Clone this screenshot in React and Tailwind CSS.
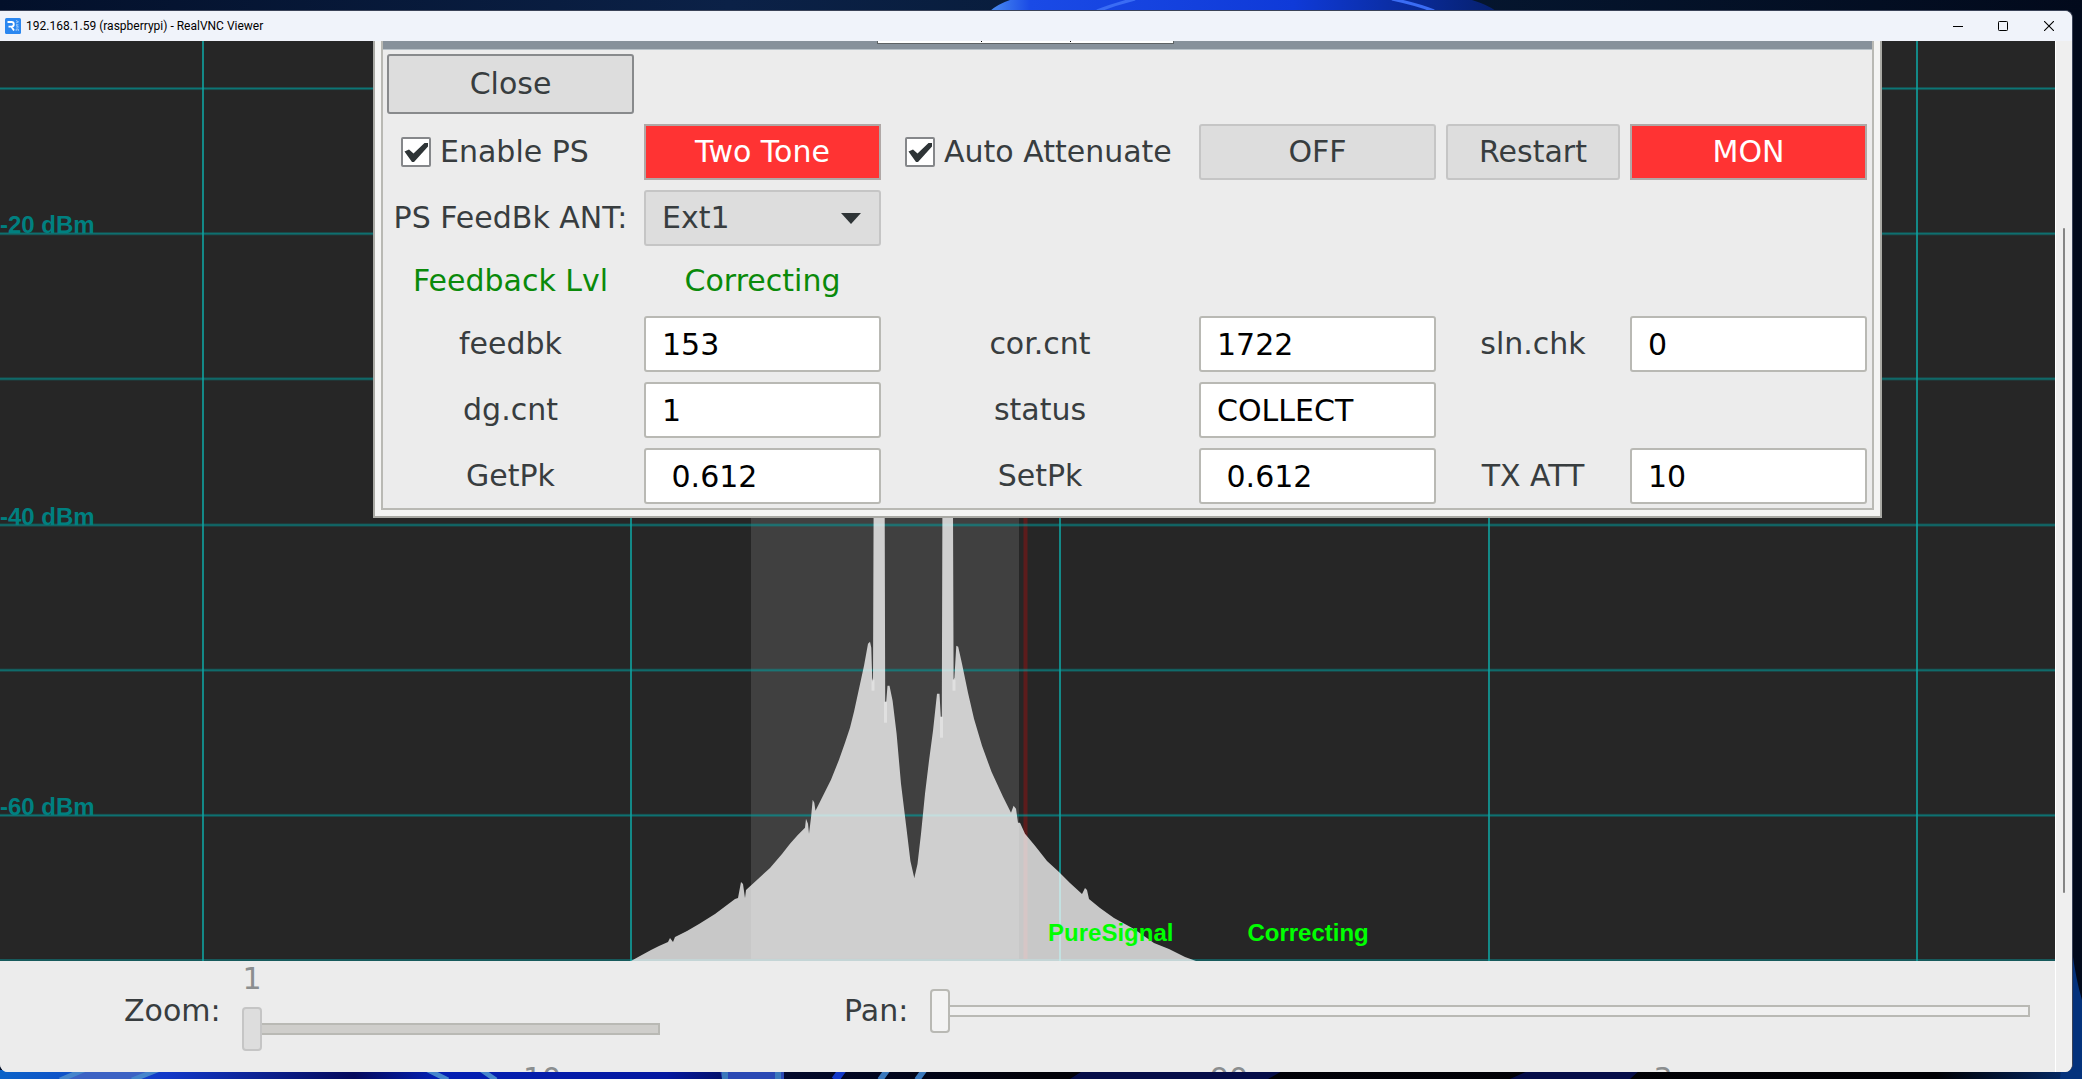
import React from "react";

const LABEL = "flex items-center justify-center whitespace-nowrap text-[#383d3f]";
const BUTTON = "flex h-full w-full items-center justify-center whitespace-nowrap rounded-[3px] border-2 border-[#c5c5c5] bg-[#dddddd] text-[#383d3f]";
const RED_BUTTON = "flex h-full w-full items-center justify-center whitespace-nowrap border-2 border-[#b0a8a6] bg-[#ff3333] text-white";
const ENTRY = "h-full w-full min-w-0 rounded-[3px] border-2 border-[#b9b9b4] bg-white px-4 text-black outline-none";
const RANGE =
  "block h-11 w-full appearance-none bg-transparent outline-none [&::-webkit-slider-runnable-track]:h-3 [&::-webkit-slider-runnable-track]:border-2 [&::-webkit-slider-runnable-track]:border-[#b9b9b4] [&::-webkit-slider-thumb]:ml-[-2px] [&::-webkit-slider-thumb]:mt-[-18px] [&::-webkit-slider-thumb]:h-11 [&::-webkit-slider-thumb]:w-5 [&::-webkit-slider-thumb]:appearance-none [&::-webkit-slider-thumb]:rounded-[4px] [&::-webkit-slider-thumb]:border-2";

const GRID_X = [203, 631, 1060, 1489, 1917];
const GRID_Y = [47, 192, 337, 483, 628, 773];

const TRACE =
  "631,919 640,914 651,908 659,904 668,900 670,896 673,900 675,895 687,889 699,882 715,872 727,863 735,857 738,856 741,840 743,842 745,856 746,848 758,837 770,826 782,812 790,802 798,793 805,786 806,777 808,782 809,792 811,776 812.7,758 814.3,761 815.5,769 821,758 831,738 839,718 845,701 850,686 854,670 859,647 864,624 868,602 870,600 871.3,606 872.2,636 873,640 873.6,470 884.7,470 885.2,660 886.2,660 887.5,644 889.5,644 892.6,659 896.6,692 901,742 906.4,786 910.4,819 914.3,836 917.5,822 921,792 925,752 929,719 933,689 937,652 939.5,652 940.8,675 941.8,675 942.4,470 953,470 953.6,638 954.4,636 956.3,604 958.2,605 962,622 968,651 974,677 982,704 991.5,730 1003,755 1011,771 1013.6,764 1016,767 1018,781 1020,781 1025,792 1035,804 1047,819 1059,830 1070,841 1082,852 1085,846 1087,848 1089,857 1100,866 1114,876 1134,887 1154,901 1169,907 1185,915 1196,919";

const VALLEYS = [
  [871.5, 638, 11],
  [884, 660, 21],
  [940, 675, 21],
  [952.5, 638, 11],
];

function Wallpaper() {
  return (
    <svg className="absolute inset-0 h-full w-full" viewBox="0 0 2082 1079" preserveAspectRatio="none" aria-hidden="true">
      <defs>
        <linearGradient id="sky" x1="0" x2="1">
          <stop offset="0" stopColor="#03102a" />
          <stop offset="0.35" stopColor="#0b2147" />
          <stop offset="0.6" stopColor="#061a35" />
          <stop offset="1" stopColor="#020a1c" />
        </linearGradient>
        <linearGradient id="floor" x1="0" x2="1">
          <stop offset="0" stopColor="#0b63c8" />
          <stop offset="0.08" stopColor="#1238c8" />
          <stop offset="0.17" stopColor="#050a5c" />
          <stop offset="0.21" stopColor="#0420b4" />
          <stop offset="0.32" stopColor="#0418a0" />
          <stop offset="0.38" stopColor="#02082a" />
          <stop offset="0.5" stopColor="#010108" />
          <stop offset="0.93" stopColor="#000004" />
          <stop offset="1" stopColor="#032c70" />
        </linearGradient>
        <linearGradient id="bloom" x1="0" x2="1">
          <stop offset="0" stopColor="#4a8cf0" />
          <stop offset="0.08" stopColor="#1a4ae6" />
          <stop offset="0.6" stopColor="#0f3ad8" />
          <stop offset="1" stopColor="#06206e" />
        </linearGradient>
      </defs>
      <rect width="2082" height="1079" fill="url(#sky)" />
      <path d="M990 11 Q998 4 1010 0 H1472 Q1488 5 1496 11 Z" fill="url(#bloom)" />
      <path d="M1097 11 Q1115 4 1135 -1 M1392 -1 Q1420 5 1434 11" fill="none" stroke="#3a6cf4" strokeWidth="3" />
      <rect y="1070" width="2082" height="9" fill="url(#floor)" />
      <path d="M62 1079 L84 1070 H158 L134 1079 Z" fill="#3c62c4" />
      <path d="M60 1080 L86 1069 M132 1080 L160 1069 M448 1080 L426 1069 M496 1080 L480 1069" stroke="#4585cc" strokeWidth="5" />
      <path d="M720 1070 H784 V1079 H722 Z" fill="#2a48b4" />
      <path d="M725 1069 V1080 M778 1069 V1080 M917 1080 L925 1069 M880 1080 L888 1069" stroke="#3a78bc" strokeWidth="6" />
      <path d="M835 1080 L843 1069" stroke="#1238c8" strokeWidth="8" />
      <path d="M1070 1079 L1084 1070 H1284 L1268 1079 Z M1510 1079 L1530 1070 H1640 L1630 1079 Z" fill="#050c48" />
      <path d="M2072 950 Q2076 980 2082 1000 V1079 H2060 Z" fill="#04327c" />
    </svg>
  );
}

function TitleBar() {
  return (
    <header className="flex h-[30px] shrink-0 items-center bg-[#f0f3fa] pl-[5px]">
      <svg width="16" height="16" viewBox="0 0 16 16" aria-hidden="true">
        <rect width="16" height="16" rx="1.5" fill="#2b87f0" />
        <path d="M2.5 4 H6.5 A2.3 2.3 0 0 1 6.5 8.6 H3.5 M6.3 8.6 L9 12.5" fill="none" stroke="#fff" strokeWidth="1.8" />
        <path d="M11 2.5 L13.5 3.8 L11 5 M13.5 6.8 H11 L13.5 9 H11 M13.3 13 V11 H11.2 V13" fill="none" stroke="#a9d0fb" strokeWidth="0.9" />
      </svg>
      <h1 className="ml-[5px] flex-1 whitespace-nowrap font-['Roboto',sans-serif] text-[12px] leading-4 text-black">
        192.168.1.59 (raspberrypi) - RealVNC Viewer
      </h1>
      <button type="button" aria-label="Minimize" className="flex h-full w-[45px] items-center justify-center">
        <svg width="10" height="10" viewBox="0 0 10 10"><path d="M0 5.5 H10" stroke="#000" /></svg>
      </button>
      <button type="button" aria-label="Maximize" className="flex h-full w-[46px] items-center justify-center">
        <svg width="10" height="10" viewBox="0 0 10 10"><rect x="0.5" y="0.5" width="9" height="9" rx="0.8" fill="none" stroke="#000" /></svg>
      </button>
      <button type="button" aria-label="Close window" className="flex h-full w-[46px] items-center justify-center">
        <svg width="10" height="10" viewBox="0 0 10 10"><path d="M0 0 L10 10 M10 0 L0 10" stroke="#000" strokeWidth="1.1" /></svg>
      </button>
    </header>
  );
}

function Spectrum() {
  return (
    <svg className="absolute inset-0 h-full w-full" viewBox="0 0 2055 919" preserveAspectRatio="none" aria-hidden="true">
      <rect width="2055" height="919" fill="#262626" />
      <rect x="751" width="268" height="919" fill="#404040" />
      <rect x="1023.5" width="4" height="919" fill="#5c1c1c" />
      {GRID_Y.map((y) => (
        <g key={y}>
          <rect y={y - 1} width="2055" height="3" fill="#00a0a0" opacity="0.35" />
          <rect y={y} width="2055" height="1" fill="#00a0a0" opacity="0.5" />
        </g>
      ))}
      <rect y="917" width="2055" height="2" fill="#175a5c" />
      {GRID_X.map((x) => (
        <rect key={x} x={x - 1} width="2" height="919" fill="#0fa3a0" opacity="0.8" />
      ))}
      <polygon points={TRACE} fill="#fff" opacity="0.75" />
      {VALLEYS.map(([x, y, h]) => (
        <rect key={x} x={x} y={y} width="3" height={h} fill="#fff" opacity="0.35" />
      ))}
    </svg>
  );
}

function DbLabels() {
  return (
    <div className="absolute inset-0 flex flex-col font-['Liberation_Sans',sans-serif] text-[24px] font-bold leading-[28px] text-[#008080]">
      {[["-20 dBm", "grow-[192]"], ["-40 dBm", "grow-[291]"], ["-60 dBm", "grow-[290]"]].map(([text, grow]) => (
        <div key={text} className={"flex basis-0 items-end " + grow}>
          <span className="-mb-1.5">{text}</span>
        </div>
      ))}
      <div className="grow-[146] basis-0" />
    </div>
  );
}

function Check({ id, children }) {
  return (
    <div className="flex items-center gap-[9px] pl-[14px] text-[#383d3f]">
      <span className="relative h-[30px] w-[30px] shrink-0">
        <input id={id} type="checkbox" defaultChecked className="block h-[30px] w-[30px] appearance-none rounded-[2px] border-2 border-[#85878a] bg-white" />
        <svg className="pointer-events-none absolute inset-0" width="30" height="30" viewBox="0 0 30 30" aria-hidden="true">
          <path d="M3.5 14.5 L8 12.5 L12.5 16.5 L23.5 6 L27 6 L27 9.5 L13 25 L11 25 Z" fill="#2e3436" />
        </svg>
      </span>
      <label htmlFor={id} className="whitespace-nowrap">{children}</label>
    </div>
  );
}

function Field({ id, label, value }) {
  return (
    <>
      <label htmlFor={id} className={LABEL}>{label}</label>
      <input id={id} type="text" defaultValue={value} className={ENTRY} />
    </>
  );
}

function PureSignalDialog() {
  return (
    <section className="absolute left-[373px] right-[173px] top-0 border-x-2 border-b-2 border-[#a9a9a4] bg-[#f4f4f3] px-[6px] pb-[6px]">
      <div className="border-x-2 border-b-2 border-[#b9b9b4] bg-[#ececec]">
        <div className="flex h-[9px] border-b border-[#b9c2c9] bg-[#87919b]">
          <div className="ml-[494px] flex h-[3px] w-[297px] justify-center gap-[88px] border-x border-b border-[#5e6365] bg-white">
            <span className="h-px w-px bg-black" />
            <span className="h-px w-px bg-black" />
          </div>
        </div>
        <div className="grid grid-cols-[247fr_237fr_298fr_237fr_174fr_237fr] grid-rows-[60px_56px_56px_50px_56px_56px_56px] gap-[10px] pb-[4px] pl-[4px] pr-[5px] pt-[4px]">
          <button type="button" className="flex items-center justify-center rounded-[3px] border-2 border-[#888a8c] bg-[#dddddd] text-[#383d3f]">Close</button>
          <div className="col-span-5" />

          <Check id="enable-ps">Enable PS</Check>
          <button type="button" className={RED_BUTTON}>Two Tone</button>
          <Check id="auto-att">Auto Attenuate</Check>
          <button type="button" className={BUTTON}>OFF</button>
          <button type="button" className={BUTTON}>Restart</button>
          <button type="button" className={RED_BUTTON}>MON</button>

          <label htmlFor="ant" className={LABEL}>PS FeedBk ANT:</label>
          <div className="relative">
            <select id="ant" className="h-full w-full appearance-none rounded-[3px] border-2 border-[#c5c5c5] bg-[#dddddd] px-4 text-[#383d3f] outline-none">
              <option>Ext1</option>
            </select>
            <svg className="pointer-events-none absolute right-5 top-[23px]" width="20" height="11" viewBox="0 0 20 11" aria-hidden="true">
              <path d="M0 0 H20 L10 11 Z" fill="#2e3436" />
            </svg>
          </div>
          <div className="col-span-4" />

          <span className="flex items-center justify-center whitespace-nowrap text-[#0a8a0a]">Feedback Lvl</span>
          <span className="flex items-center justify-center text-[#0a8a0a]">Correcting</span>
          <div className="col-span-4" />

          <Field id="feedbk" label="feedbk" value="153" />
          <Field id="corcnt" label="cor.cnt" value="1722" />
          <Field id="slnchk" label="sln.chk" value="0" />

          <Field id="dgcnt" label="dg.cnt" value="1" />
          <Field id="status" label="status" value="COLLECT" />
          <div className="col-span-2" />

          <Field id="getpk" label="GetPk" value=" 0.612" />
          <Field id="setpk" label="SetPk" value=" 0.612" />
          <Field id="txatt" label="TX ATT" value="10" />
        </div>
      </div>
    </section>
  );
}

function Controls() {
  return (
    <footer className="h-[111px] shrink-0 overflow-hidden bg-[#ececec] text-[#383d3f]">
      <div className="grid h-[100px] grid-cols-[118px_418fr_184fr_86px_1100fr] items-center pl-[124px] pr-[25px]">
        <label htmlFor="zoom">Zoom:</label>
        <div className="flex flex-col self-start">
          <output htmlFor="zoom" className="w-5 text-center leading-[36px] text-[#8b8e8f]">1</output>
          <input
            id="zoom"
            type="range"
            min="1"
            max="8"
            defaultValue="1"
            className={RANGE + " mt-[10px] [&::-webkit-slider-runnable-track]:bg-[#cfcecb] [&::-webkit-slider-thumb]:border-[#c5c5c5] [&::-webkit-slider-thumb]:bg-[#dddddd]"}
          />
        </div>
        <div />
        <label htmlFor="pan">Pan:</label>
        <input
          id="pan"
          type="range"
          min="0"
          max="100"
          defaultValue="0"
          className={RANGE + " [&::-webkit-slider-runnable-track]:bg-[#f0f0f0] [&::-webkit-slider-thumb]:border-[#b9b9b4] [&::-webkit-slider-thumb]:bg-[#f3f3f3]"}
        />
      </div>
      <div className="grid grid-cols-[1084fr_290fr_578fr_103fr] text-center leading-[36px] text-[#8b8e8f]">
        <span>10</span>
        <span>90</span>
        <span>3</span>
      </div>
    </footer>
  );
}

export default function App() {
  return (
    <div className="relative flex h-screen flex-col overflow-hidden bg-[#020a1c] pb-[7px] pr-[9px] pt-[10px]">
      <Wallpaper />
      <div className="relative flex min-h-0 flex-1 flex-col overflow-hidden rounded-tr-lg rounded-b-lg border-r border-t border-[#3b4358] bg-[#efefef]">
        <TitleBar />
        <div className="flex min-h-0 flex-1">
          <main className="flex min-w-0 flex-1 flex-col font-['DejaVu_Sans',sans-serif] text-[30px] leading-[36px]">
            <div className="relative min-h-0 flex-1 overflow-hidden">
              <Spectrum />
              <DbLabels />
              <div className="absolute bottom-[14px] left-[51%] flex gap-[74px] font-['Liberation_Sans',sans-serif] text-[24px] font-bold leading-[28px] text-[#00ff00]">
                <span>PureSignal</span>
                <span>Correcting</span>
              </div>
              <PureSignalDialog />
            </div>
            <Controls />
          </main>
          <div className="flex w-[17px] shrink-0 flex-col items-center border-l border-white bg-[#efefef]">
            <div className="grow-[187]" />
            <div className="w-0.5 grow-[664] rounded-full bg-[#858585]" />
            <div className="grow-[179]" />
          </div>
        </div>
      </div>
    </div>
  );
}
